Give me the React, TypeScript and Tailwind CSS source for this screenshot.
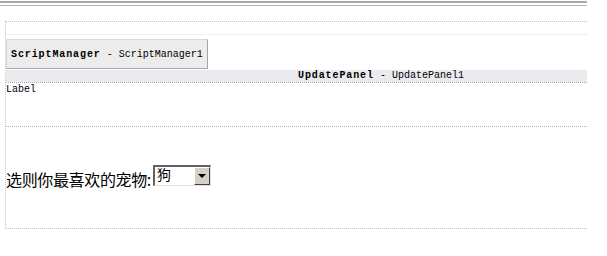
import React from 'react';

const mono = { fontFamily: '"Liberation Mono", monospace' };

const App = () => {
  return (
    <div className="w-[607px] h-[256px] bg-white overflow-hidden relative">
      {/* top rules */}
      <div className="w-[587px] h-[2px] mt-[1px] bg-[#a8a8a8]" />
      <div className="w-[587px] h-px mt-[2px] bg-[#b4b4b4]" />

      <div className="ml-[5px] mt-[15px] w-[582px] h-[208px] border-t border-l border-b border-dotted border-[#c4c4c4] flex flex-col">
        <div className="h-[12px]" />
        <div className="border-t border-dotted border-[#e0e0e0]" />
        <div className="h-[4px]" />

        {/* ScriptManager */}
        <div
          className="w-[202px] h-[30px] bg-[#ececec] border border-[#d8d8d8] border-r-[#a4a4a4] border-b-[#a4a4a4] flex items-center pl-[4px] text-[10px] text-black"
          style={mono}
        >
          <span className="font-bold tracking-[0.9px]">ScriptManager</span>
          <span className="ml-[6px]">- ScriptManager1</span>
        </div>

        {/* UpdatePanel header */}
        <div
          className="h-[12px] mt-px bg-[#ebebef] flex items-center pl-[292px] text-[10px] text-black leading-none"
          style={mono}
        >
          <span className="font-bold tracking-[0.9px]">UpdatePanel</span>
          <span className="ml-[6px]">- UpdatePanel1</span>
        </div>
        <div className="border-t border-dotted border-[#a8a8a8]" />
        <div className="text-[10px] leading-[12px] mt-px text-black" style={mono}>
          Label
        </div>
        <div className="h-[30px]" />
        <div className="border-t border-dotted border-[#b0b0b0]" />

        {/* select row */}
        <div className="mt-[38px] flex items-start">
          <span
            className="text-[16px] leading-[20px] mt-[4px] tracking-[-0.35px] text-black"
            style={{ fontFamily: '"Noto Sans CJK SC", sans-serif' }}
          >
            选则你最喜欢的宠物:
          </span>
          <div className="ml-[2px] w-[58px] h-[21px] border-t-2 border-l-2 border-t-[#606060] border-l-[#606060] border-r border-b border-r-[#e0e0e0] border-b-[#e0e0e0] bg-white flex">
            <span
              className="flex-1 text-[14px] leading-[15px] pl-[2px] text-black"
              style={{ fontFamily: '"Noto Sans CJK SC", sans-serif' }}
            >
              狗
            </span>
            <div className="w-[16px] h-[18px] bg-[#d4d0c8] border border-t-white border-l-white border-r-[#404040] border-b-[#404040] flex items-center justify-center">
              <svg width="8" height="4" viewBox="0 0 8 4">
                <polygon points="0,0 8,0 4,4" fill="#000" />
              </svg>
            </div>
          </div>
        </div>
      </div>
    </div>
  );
};

export default App;
